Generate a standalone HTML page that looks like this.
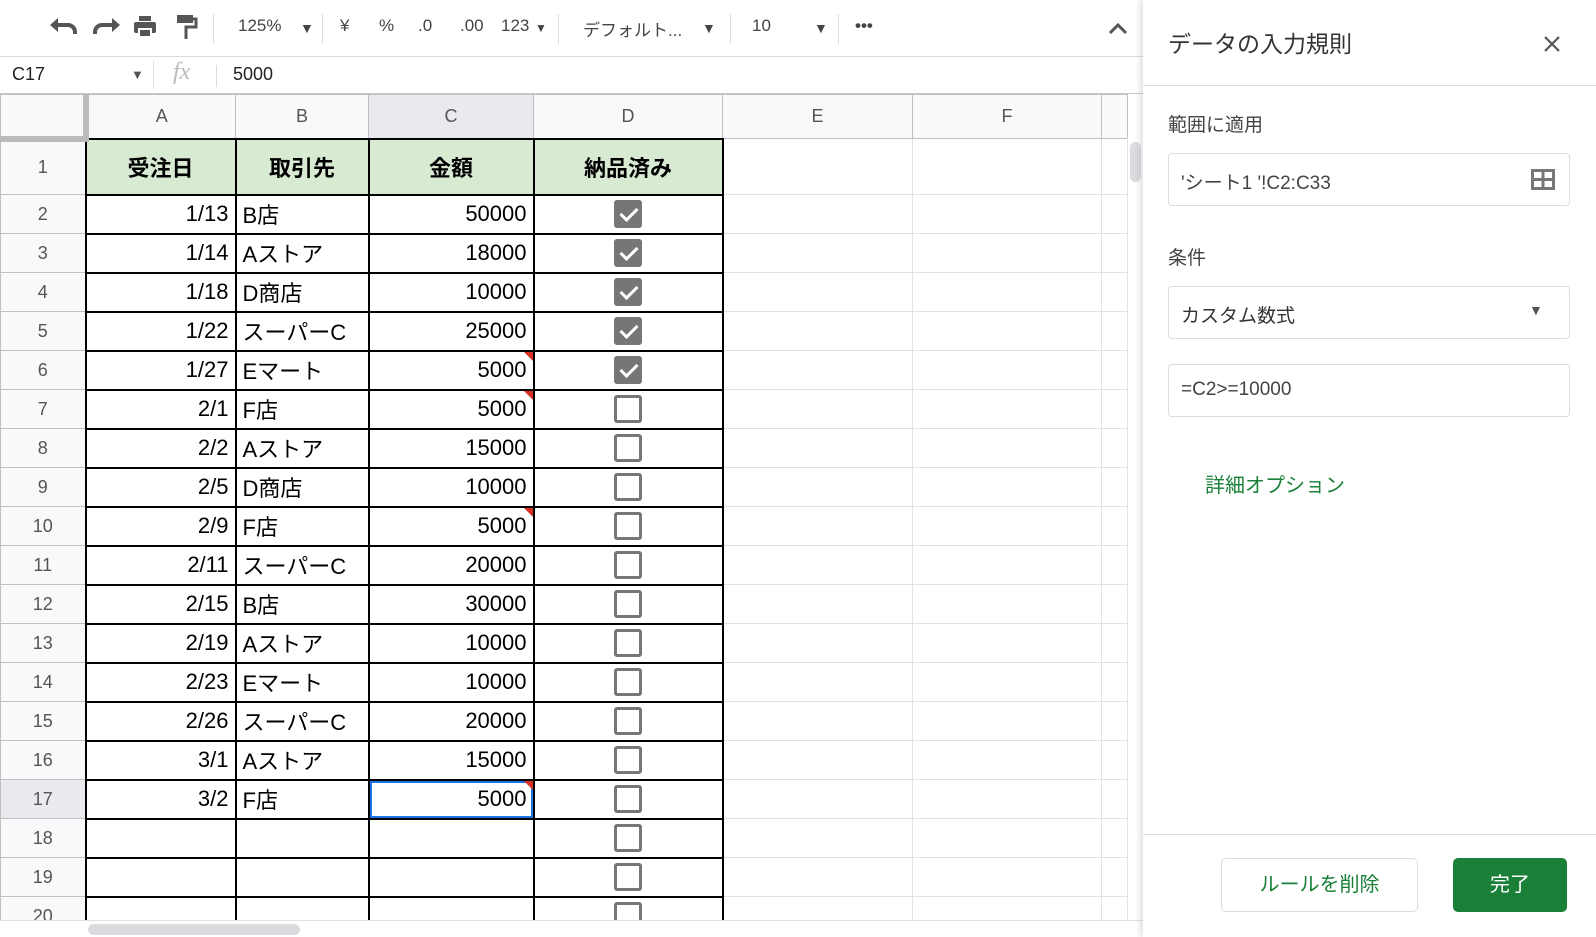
<!DOCTYPE html>
<html><head><meta charset="utf-8"><style>
*{box-sizing:border-box;margin:0;padding:0}
body{width:1596px;height:937px;overflow:hidden;background:#fff;font-family:"Liberation Sans","Noto Sans CJK JP",sans-serif;position:relative;color:#222}
.abs{position:absolute}
.tb{top:0;left:0;width:1143px;height:57px;border-bottom:1px solid #dadce0}
.tb span{position:absolute;top:16px;font-size:17px;color:#444}
.sep{position:absolute;top:14px;width:1px;height:30px;background:#dadce0}
.fb{top:57px;left:0;width:1143px;height:37px;border-bottom:1px solid #c8c8c8}
table{position:absolute;left:0;top:94px;border-collapse:collapse;table-layout:fixed}
td{border:1px solid #e2e2e2;font-size:22px;color:#000;padding:0 6px;white-space:nowrap;overflow:hidden}
tr{height:39px}
td.rh{background:#f8f9fa;color:#555;font-size:18px;text-align:center;border-color:#c0c0c0}
tr.ch td{background:#f8f9fa;color:#555;font-size:18px;text-align:center;border-color:#c0c0c0;height:44px}
td.b{border:2px solid #000}
td.h{background:#d9ead3;font-weight:bold;text-align:center}
td.r{text-align:right}
td.c{text-align:center;padding:0}
.cb{display:inline-block;width:28px;height:28px;border:3px solid #767676;border-radius:3px;vertical-align:middle}
.cb.k{background:#767676;position:relative}
.cb.k:after{content:"";position:absolute;left:7px;top:1px;width:7px;height:14px;border:solid #fff;border-width:0 3px 3px 0;transform:rotate(45deg)}
.tri{position:relative}
.tri:after{content:"";position:absolute;right:0;top:0;border-top:9px solid #d93025;border-left:9px solid transparent}
.panel{left:1143px;top:0;width:453px;height:937px;background:#fff;box-shadow:-3px 0 6px rgba(0,0,0,.12)}
.box{position:absolute;left:25px;width:402px;height:53px;border:1px solid #dadce0;border-radius:4px;font-size:19px;color:#444;padding:14px 12px}
</style></head><body>
<div class="abs tb">
<svg class="abs" style="left:50px;top:17px" width="28" height="22" viewBox="0 0 28 22"><path d="M6 8h12a7 7 0 0 1 7 7v2" fill="none" stroke="#555" stroke-width="4"/><path d="M0 8l8-7v14z" fill="#555"/></svg>
<svg class="abs" style="left:92px;top:17px" width="28" height="22" viewBox="0 0 28 22"><path d="M22 8H10a7 7 0 0 0-7 7v2" fill="none" stroke="#555" stroke-width="4"/><path d="M28 8l-8-7v14z" fill="#555"/></svg>
<svg class="abs" style="left:133px;top:15px" width="24" height="24" viewBox="0 0 24 24"><rect x="6" y="1" width="12" height="5" fill="#555"/><rect x="1" y="7" width="22" height="11" rx="2" fill="#555"/><rect x="6" y="14" width="12" height="8" fill="#555" stroke="#fff" stroke-width="2"/></svg>
<svg class="abs" style="left:176px;top:14px" width="22" height="26" viewBox="0 0 22 26"><rect x="1" y="1" width="16" height="8" fill="#555"/><path d="M17 5h3v8h-10v12" fill="none" stroke="#555" stroke-width="3"/></svg>
<div class="sep" style="left:213px"></div>
<span style="left:238px">125%</span><span style="left:300px;font-size:14px;top:20px">▼</span>
<div class="sep" style="left:322px"></div>
<span style="left:340px">¥</span><span style="left:379px">%</span><span style="left:418px">.0</span><span style="left:460px">.00</span><span style="left:501px">123</span><span style="left:535px;font-size:12px;top:21px">▼</span>
<div class="sep" style="left:558px"></div>
<span style="left:583px">デフォルト...</span><span style="left:702px;font-size:14px;top:20px">▼</span>
<div class="sep" style="left:730px"></div>
<span style="left:752px">10</span><span style="left:814px;font-size:14px;top:20px">▼</span>
<div class="sep" style="left:838px"></div>
<span style="left:855px;font-weight:bold;top:16px">•••</span>
<svg class="abs" style="left:1108px;top:22px" width="20" height="13" viewBox="0 0 20 13"><path d="M2 11l8-8 8 8" fill="none" stroke="#555" stroke-width="3"/></svg>
</div>
<div class="abs fb">
<span class="abs" style="left:12px;top:7px;font-size:18px">C17</span>
<span class="abs" style="left:131px;top:10px;font-size:13px;color:#555">▼</span>
<div class="abs" style="left:153px;top:4px;width:1px;height:28px;background:#dadce0"></div>
<span class="abs" style="left:173px;top:2px;font-size:24px;font-style:italic;color:#bbb;font-family:'Liberation Serif',serif">fx</span>
<div class="abs" style="left:216px;top:8px;width:1px;height:22px;background:#dadce0"></div>
<span class="abs" style="left:233px;top:7px;font-size:18px">5000</span>
</div>
<table>
<colgroup><col style="width:85px"><col style="width:150px"><col style="width:133px"><col style="width:165px"><col style="width:189px"><col style="width:190px"><col style="width:189px"><col style="width:26px"></colgroup>
<tr class="ch"><td style="border-right:6px solid #bbb;border-bottom:6px solid #bbb"></td><td>A</td><td>B</td><td style="background:#e8eaed">C</td><td>D</td><td>E</td><td>F</td><td></td></tr>
<tr style="height:56px"><td class="rh">1</td><td class="b h">受注日</td><td class="b h">取引先</td><td class="b h">金額</td><td class="b h">納品済み</td><td></td><td></td><td></td></tr>
<tr><td class="rh">2</td><td class="b r">1/13</td><td class="b">B店</td><td class="b r">50000</td><td class="b c"><span class="cb k"></span></td><td></td><td></td><td></td></tr>
<tr><td class="rh">3</td><td class="b r">1/14</td><td class="b">Aストア</td><td class="b r">18000</td><td class="b c"><span class="cb k"></span></td><td></td><td></td><td></td></tr>
<tr><td class="rh">4</td><td class="b r">1/18</td><td class="b">D商店</td><td class="b r">10000</td><td class="b c"><span class="cb k"></span></td><td></td><td></td><td></td></tr>
<tr><td class="rh">5</td><td class="b r">1/22</td><td class="b">スーパーC</td><td class="b r">25000</td><td class="b c"><span class="cb k"></span></td><td></td><td></td><td></td></tr>
<tr><td class="rh">6</td><td class="b r">1/27</td><td class="b">Eマート</td><td class="b r tri">5000</td><td class="b c"><span class="cb k"></span></td><td></td><td></td><td></td></tr>
<tr><td class="rh">7</td><td class="b r">2/1</td><td class="b">F店</td><td class="b r tri">5000</td><td class="b c"><span class="cb"></span></td><td></td><td></td><td></td></tr>
<tr><td class="rh">8</td><td class="b r">2/2</td><td class="b">Aストア</td><td class="b r">15000</td><td class="b c"><span class="cb"></span></td><td></td><td></td><td></td></tr>
<tr><td class="rh">9</td><td class="b r">2/5</td><td class="b">D商店</td><td class="b r">10000</td><td class="b c"><span class="cb"></span></td><td></td><td></td><td></td></tr>
<tr><td class="rh">10</td><td class="b r">2/9</td><td class="b">F店</td><td class="b r tri">5000</td><td class="b c"><span class="cb"></span></td><td></td><td></td><td></td></tr>
<tr><td class="rh">11</td><td class="b r">2/11</td><td class="b">スーパーC</td><td class="b r">20000</td><td class="b c"><span class="cb"></span></td><td></td><td></td><td></td></tr>
<tr><td class="rh">12</td><td class="b r">2/15</td><td class="b">B店</td><td class="b r">30000</td><td class="b c"><span class="cb"></span></td><td></td><td></td><td></td></tr>
<tr><td class="rh">13</td><td class="b r">2/19</td><td class="b">Aストア</td><td class="b r">10000</td><td class="b c"><span class="cb"></span></td><td></td><td></td><td></td></tr>
<tr><td class="rh">14</td><td class="b r">2/23</td><td class="b">Eマート</td><td class="b r">10000</td><td class="b c"><span class="cb"></span></td><td></td><td></td><td></td></tr>
<tr><td class="rh">15</td><td class="b r">2/26</td><td class="b">スーパーC</td><td class="b r">20000</td><td class="b c"><span class="cb"></span></td><td></td><td></td><td></td></tr>
<tr><td class="rh">16</td><td class="b r">3/1</td><td class="b">Aストア</td><td class="b r">15000</td><td class="b c"><span class="cb"></span></td><td></td><td></td><td></td></tr>
<tr><td class="rh" style="background:#e8eaed">17</td><td class="b r">3/2</td><td class="b">F店</td><td class="b r tri" style="box-shadow:inset 0 0 0 2px #1a73e8">5000</td><td class="b c"><span class="cb"></span></td><td></td><td></td><td></td></tr>
<tr><td class="rh">18</td><td class="b"></td><td class="b"></td><td class="b"></td><td class="b c"><span class="cb"></span></td><td></td><td></td><td></td></tr>
<tr><td class="rh">19</td><td class="b"></td><td class="b"></td><td class="b"></td><td class="b c"><span class="cb"></span></td><td></td><td></td><td></td></tr>
<tr><td class="rh">20</td><td class="b"></td><td class="b"></td><td class="b"></td><td class="b c"><span class="cb"></span></td><td></td><td></td><td></td></tr>
</table>
<div class="abs" style="left:1127px;top:138px;width:16px;height:799px;background:#fff;border-left:1px solid #e2e2e2"></div>
<div class="abs" style="left:1130px;top:142px;width:11px;height:40px;background:#dadce0;border-radius:6px"></div>
<div class="abs" style="left:0;top:920px;width:1143px;height:17px;background:#fff;border-top:1px solid #e2e2e2"></div>
<div class="abs" style="left:88px;top:924px;width:212px;height:11px;background:#dadce0;border-radius:6px"></div>
<div class="abs panel">
<div class="abs" style="left:25px;top:25px;font-size:23px;color:#333">データの入力規則</div>
<svg class="abs" style="left:400px;top:35px" width="18" height="18" viewBox="0 0 18 18"><path d="M2 2l14 14M16 2L2 16" stroke="#555" stroke-width="2.2"/></svg>
<div class="abs" style="left:0;top:85px;width:453px;height:1px;background:#dadce0"></div>
<div class="abs" style="left:25px;top:110px;font-size:19px;color:#444">範囲に適用</div>
<div class="box" style="top:153px">'シート1 '!C2:C33</div>
<svg class="abs" style="left:388px;top:169px" width="24" height="21" viewBox="0 0 24 21"><rect x="1.5" y="1.5" width="21" height="18" fill="none" stroke="#777" stroke-width="3"/><path d="M12 2v17M2 10.5h20" stroke="#777" stroke-width="3"/></svg>
<div class="abs" style="left:25px;top:243px;font-size:19px;color:#444">条件</div>
<div class="box" style="top:286px;color:#333">カスタム数式</div>
<span class="abs" style="left:386px;top:302px;font-size:14px;color:#555">▼</span>
<div class="box" style="top:364px">=C2&gt;=10000</div>
<div class="abs" style="left:62px;top:469px;font-size:20px;color:#188038">詳細オプション</div>
<div class="abs" style="left:0;top:834px;width:453px;height:1px;background:#dadce0"></div>
<div class="abs" style="left:78px;top:858px;width:197px;height:54px;border:1px solid #dadce0;border-radius:5px;color:#188038;font-size:20px;text-align:center;line-height:52px">ルールを削除</div>
<div class="abs" style="left:310px;top:858px;width:114px;height:54px;background:#1a7f37;border-radius:5px;color:#fff;font-size:20px;text-align:center;line-height:54px">完了</div>
</div>
</body></html>
